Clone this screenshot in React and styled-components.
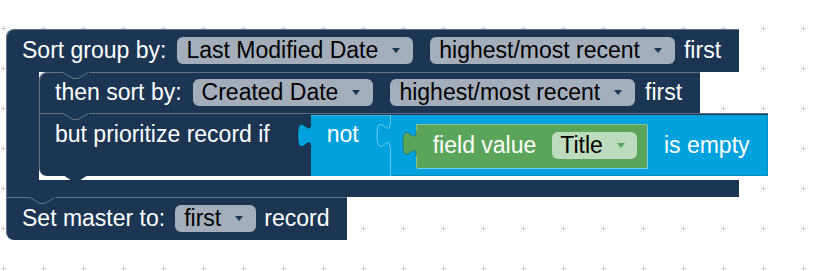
import React from 'react';
import styled, { createGlobalStyle } from 'styled-components';

const NAVY = '#1b3553';
const BLUE = '#00a2dd';
const GREEN = '#5ba55b';
const HL = 'rgba(255,255,255,0.3)';

const Global = createGlobalStyle`
  html, body { margin: 0; padding: 0; background: #fff; }
  body { font-family: "Liberation Sans", Arial, sans-serif; }
`;

const Canvas = styled.div`
  position: relative;
  width: 819px;
  height: 271px;
  overflow: hidden;
  background: #fff;
  box-sizing: border-box;
  padding: 29px 0 0 6px;
`;

const GridLayer = styled.svg`
  position: absolute;
  left: 0;
  top: 0;
  z-index: 0;
`;

const Stack = styled.div`
  position: relative;
  z-index: 1;
  display: inline-flex;
  flex-direction: column;
  align-items: flex-start;
  font-size: 23px;
  line-height: 27px;
  color: #fff;
  white-space: nowrap;
`;

const CBlock = styled.div`
  display: flex;
  flex-direction: column;
`;

const BlockRow = styled.div`
  position: relative;
  display: flex;
  align-items: center;
  height: ${(p) => p.$h}px;
  box-sizing: border-box;
  padding: 0 ${(p) => p.$pr ?? 18}px 0 16px;
  background: ${NAVY};
  border-radius: ${(p) => p.$radius || '0'};
  box-shadow: inset 1px 1px 0 ${HL};
  flex-shrink: 0;
  align-self: flex-start;
`;

const Middle = styled.div`
  display: flex;
  width: 0;
  align-items: stretch;
`;

const Arm = styled.div`
  width: 33px;
  flex-shrink: 0;
  background: ${NAVY};
  box-shadow: inset 1px 0 0 ${HL};
`;

const Interior = styled.div`
  display: flex;
  flex-direction: column;
  align-items: flex-start;
  flex-shrink: 0;
  padding-bottom: 4px;
`;

const BottomArm = styled.div`
  height: 17px;
  background: ${NAVY};
  box-shadow: inset 1px 0 0 ${HL};
`;

const Label = styled.span`
  margin-left: ${(p) => p.$ml || 0}px;
`;

const Dropdown = styled.div`
  display: inline-flex;
  align-items: center;
  height: 27px;
  box-sizing: border-box;
  padding: 0 ${(p) => p.$pr ?? 13}px 0 ${(p) => p.$pl ?? 9}px;
  margin-left: ${(p) => p.$ml || 0}px;
  border-radius: 6px;
  background: rgba(255, 255, 255, 0.6);
  color: #000;
`;

const ArrowSvg = styled.svg`
  margin-left: 14px;
  display: block;
`;

const Arrow = ({ color }) => (
  <ArrowSvg width="8" height="5" viewBox="0 0 8 5">
    <path d="M0 0H8L4 5Z" fill={color} />
  </ArrowSvg>
);

const NotchSvg = styled.svg`
  position: absolute;
  top: 0;
  left: 24px;
  overflow: visible;
`;

const Notch = () => (
  <NotchSvg width="26" height="8" viewBox="0 0 26 8">
    <rect x="0" y="0" width="26" height="1.5" fill={NAVY} />
    <polyline points="0,0.5 10,6.5 15,6.5 25,0.5" fill="none" stroke={HL} strokeWidth="1" />
  </NotchSvg>
);

const NextTabSvg = styled.svg`
  position: absolute;
  bottom: -6px;
  left: 24px;
`;

const NextTab = () => (
  <NextTabSvg width="26" height="7" viewBox="0 0 26 7">
    <polygon points="0,0 25,0 15,6.5 10,6.5" fill={NAVY} />
  </NextTabSvg>
);

const TabSvg = styled.svg`
  position: absolute;
  left: -13px;
  top: ${(p) => p.$top}px;
  overflow: visible;
`;

const PuzzleTab = ({ fill, stroke, top }) => (
  <TabSvg $top={top} width="15" height="26" viewBox="0 0 15 26">
    <path d="M15 0H13C13 16.5 0 -13.2 0 12.4S13 8.3 13 24.8H15Z" fill={fill} />
    <path d="M13 0C13 16.5 0 -13.2 0 12.4S13 8.3 13 24.8" fill="none" stroke={stroke} strokeWidth="1" />
  </TabSvg>
);

const PrioRow = styled.div`
  position: relative;
  display: flex;
  align-items: flex-start;
  height: 63px;
  background: ${NAVY};
  border-radius: 0 0 0 8px;
  box-shadow: inset 1px 1px 0 ${HL};
`;

const PrioLabel = styled.div`
  padding: 8px 41px 0 16px;
`;

const NotBlock = styled.div`
  position: relative;
  display: flex;
  align-items: flex-start;
  margin-top: 2px;
  height: 61px;
  background: ${BLUE};
  box-shadow: inset 0 1px 0 rgba(255, 255, 255, 0.25);
`;

const NotLabel = styled.div`
  padding: 6px 31px 0 16px;
`;

const IsEmptyBlock = styled.div`
  position: relative;
  display: flex;
  align-items: center;
  height: 61px;
  box-sizing: border-box;
  padding: 0 18px 0 26px;
  background: ${BLUE};
  box-shadow: inset 1px 0 0 rgba(255, 255, 255, 0.4), inset -1px -1px 0 rgba(0, 0, 0, 0.12);
`;

const FieldBlock = styled.div`
  position: relative;
  display: flex;
  align-items: center;
  height: 44px;
  box-sizing: border-box;
  padding: 0 10px 0 17px;
  background: ${GREEN};
  box-shadow: inset 1px 1px 0 rgba(255, 255, 255, 0.3), 1px 1px 0 rgba(255, 255, 255, 0.45);
`;

const GridBackground = () => (
  <GridLayer width="819" height="271">
    <defs>
      <pattern id="plusGrid" width="40" height="40" patternUnits="userSpaceOnUse" x="-17" y="8">
        <rect x="18" y="20" width="5" height="1" fill="#cfcfcf" />
        <rect x="20" y="18" width="1" height="5" fill="#cfcfcf" />
      </pattern>
    </defs>
    <rect width="819" height="271" fill="url(#plusGrid)" />
  </GridLayer>
);

export default function App() {
  return (
    <>
      <Global />
      <Canvas>
        <GridBackground />
        <Stack>
          <CBlock>
            <BlockRow $h={43} $radius="8px 0 0 0">
              <Label>Sort group by:</Label>
              <Dropdown $ml={11}>
                Last Modified Date
                <Arrow color={NAVY} />
              </Dropdown>
              <Dropdown $ml={17}>
                highest/most recent
                <Arrow color={NAVY} />
              </Dropdown>
              <Label $ml={9}>first</Label>
            </BlockRow>
            <Middle>
              <Arm />
              <Interior>
                <BlockRow $h={41} $radius="8px 0 0 0">
                  <Notch />
                  <Label>then sort by:</Label>
                  <Dropdown $ml={11}>
                    Created Date
                    <Arrow color={NAVY} />
                  </Dropdown>
                  <Dropdown $ml={17}>
                    highest/most recent
                    <Arrow color={NAVY} />
                  </Dropdown>
                  <Label $ml={10}>first</Label>
                </BlockRow>
                <PrioRow>
                  <Notch />
                  <PrioLabel>but prioritize record if</PrioLabel>
                  <NotBlock>
                    <PuzzleTab fill={BLUE} stroke="rgba(0,0,0,0.22)" top={8} />
                    <NotLabel>not</NotLabel>
                    <IsEmptyBlock>
                      <PuzzleTab fill={BLUE} stroke="rgba(255,255,255,0.45)" top={8} />
                      <FieldBlock>
                        <PuzzleTab fill={GREEN} stroke="rgba(0,0,0,0.2)" top={7} />
                        <Label>field value</Label>
                        <Dropdown $ml={16} $pl={8} $pr={12}>
                          Title
                          <Arrow color={GREEN} />
                        </Dropdown>
                      </FieldBlock>
                      <Label $ml={17}>is empty</Label>
                    </IsEmptyBlock>
                  </NotBlock>
                  <NextTab />
                </PrioRow>
              </Interior>
            </Middle>
            <BottomArm />
          </CBlock>
          <BlockRow $h={43} $radius="0 0 0 8px">
            <Notch />
            <Label>Set master to:</Label>
            <Dropdown $ml={10}>
              first
              <Arrow color={NAVY} />
            </Dropdown>
            <Label $ml={8}>record</Label>
          </BlockRow>
        </Stack>
      </Canvas>
    </>
  );
}
